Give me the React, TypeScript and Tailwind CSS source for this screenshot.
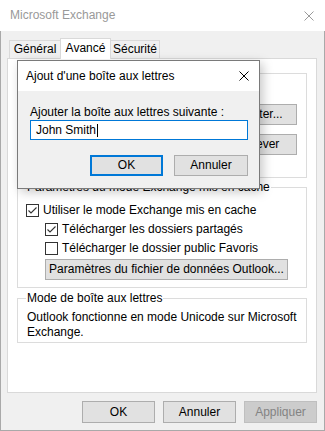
import React from "react"

function Check({ checked }: { checked: boolean }) {
  return (
    <svg width="13" height="13" viewBox="0 0 13 13" className="shrink-0">
      <rect x="0.5" y="0.5" width="12" height="12" fill="white" stroke="#333333" />
      {checked && <path d="M2.5 6.5 L5 9 L10.5 3.5" fill="none" stroke="#333333" strokeWidth="1.1" />}
    </svg>
  )
}

function CloseX({ color, size = 10 }: { color: string; size?: number }) {
  return (
    <svg width={size} height={size} viewBox={`0 0 ${size} ${size}`}>
      <path d={`M0.5 0.5 L${size - 0.5} ${size - 0.5} M${size - 0.5} 0.5 L0.5 ${size - 0.5}`} stroke={color} strokeWidth="1" />
    </svg>
  )
}

function Btn({ children, className = "" }: { children: React.ReactNode; className?: string }) {
  return (
    <div className={`h-[21px] bg-[#e1e1e1] border border-[#adadad] flex items-center justify-center ${className}`}>
      {children}
    </div>
  )
}

export default function App() {
  return (
    <div className="w-[325px] h-[431px] relative overflow-hidden text-[12px] text-black font-['Liberation_Sans',Arial,sans-serif] leading-[15px]">
      {/* Title bar */}
      <div className="h-[31px] bg-white flex items-center justify-between pl-[10px] pr-[11px] text-[#999999]">
        <span>Microsoft Exchange</span>
        <CloseX color="#9a9a9a" />
      </div>

      {/* Window body */}
      <div className="bg-[#f0f0f0] border-x border-b border-[#a9a9a9] pt-[7px] pl-[6px] pr-[7px] pb-[7px]">
        {/* Tabs */}
        <div className="flex items-end h-[20px] pl-[2px]">
          <div className="w-[52px] h-[18px] border border-b-0 border-[#d9d9d9] bg-[#f0f0f0] flex items-center justify-center">Général</div>
          <div className="w-[51px] h-[21px] -ml-px -mb-px relative z-10 bg-white border border-b-0 border-[#d9d9d9] flex items-center justify-center pb-[2px]">Avancé</div>
          <div className="w-[50px] h-[18px] -ml-px border border-b-0 border-[#d9d9d9] bg-[#f0f0f0] flex items-center justify-center">Sécurité</div>
        </div>

        {/* Tab panel */}
        <div className="h-[335px] bg-white border border-[#d9d9d9] px-[9px] pt-[14px]">
          {/* Mailboxes group (mostly under the dialog) */}
          <div className="relative h-[105px] border border-[#dcdcdc] pt-[12px] px-[9px]">
            <div className="tracking-[-0.35px]">Ouvrir ces boîtes aux lettres supplémentaires :</div>
            <div className="flex gap-[10px] mt-[3px]">
              <div className="flex-1 h-[64px] border border-[#7a7a7a] bg-white" />
              <div className="flex flex-col gap-[9px] w-[76px]">
                <Btn>Ajouter...</Btn>
                <Btn>Enlever</Btn>
              </div>
            </div>
          </div>

          {/* Cached mode group */}
          <div className="relative mt-[9px] h-[101px] border border-[#dcdcdc] pt-[13px] pl-[8px]">
            <span className="absolute left-[8px] -top-[8px] bg-white px-[1px]">Paramètres du mode Exchange mis en cache</span>
            <div className="h-[19px] flex items-center gap-[4px]">
              <Check checked />
              <span>Utiliser le mode Exchange mis en cache</span>
            </div>
            <div className="h-[19px] flex items-center gap-[4px] pl-[19px]">
              <Check checked />
              <span>Télécharger les dossiers partagés</span>
            </div>
            <div className="h-[19px] flex items-center gap-[4px] pl-[19px]">
              <Check checked={false} />
              <span>Télécharger le dossier public Favoris</span>
            </div>
            <Btn className="mt-[1px] ml-[19px] w-[243px]">Paramètres du fichier de données Outlook...</Btn>
          </div>

          {/* Mailbox mode group */}
          <div className="relative mt-[10px] h-[45px] border border-[#dcdcdc] pt-[11px] px-[9px]">
            <span className="absolute left-[8px] -top-[8px] bg-white px-[1px]">Mode de boîte aux lettres</span>
            <div>Outlook fonctionne en mode Unicode sur Microsoft Exchange.</div>
          </div>
        </div>

        {/* Dialog buttons */}
        <div className="flex justify-end gap-[8px] mt-[8px]">
          <Btn className="w-[73px] h-[22px]">OK</Btn>
          <Btn className="w-[73px] h-[22px]">Annuler</Btn>
          <div className="w-[73px] h-[22px] bg-[#cccccc] border border-[#bfbfbf] text-[#838383] flex items-center justify-center">Appliquer</div>
        </div>
      </div>

      {/* Modal dialog */}
      <div className="absolute left-[17px] top-[60px] w-[243px] h-[129px] border border-[#7a7a7a] bg-[#f0f0f0] shadow-[3px_3px_10px_rgba(0,0,0,0.22)] flex flex-col">
        <div className="h-[30px] bg-white flex items-center justify-between pl-[8px] pr-[10px]">
          <span>Ajout d'une boîte aux lettres</span>
          <CloseX color="#000000" />
        </div>
        <div className="pt-[14px] pl-[12px] pr-[11px]">
          <div>Ajouter la boîte aux lettres suivante :</div>
          <div className="w-[218px] h-[20px] border border-[#0078d7] bg-white pl-[5px] flex items-center">
            <span>John Smith</span>
            <span className="w-px h-[13px] bg-black ml-[1px]" />
          </div>
          <div className="flex justify-end gap-[11px] mt-[15px]">
            <div className="w-[73px] h-[21px] bg-[#e1e1e1] border-2 border-[#0078d7] flex items-center justify-center">OK</div>
            <Btn className="w-[74px]">Annuler</Btn>
          </div>
        </div>
      </div>
    </div>
  )
}
